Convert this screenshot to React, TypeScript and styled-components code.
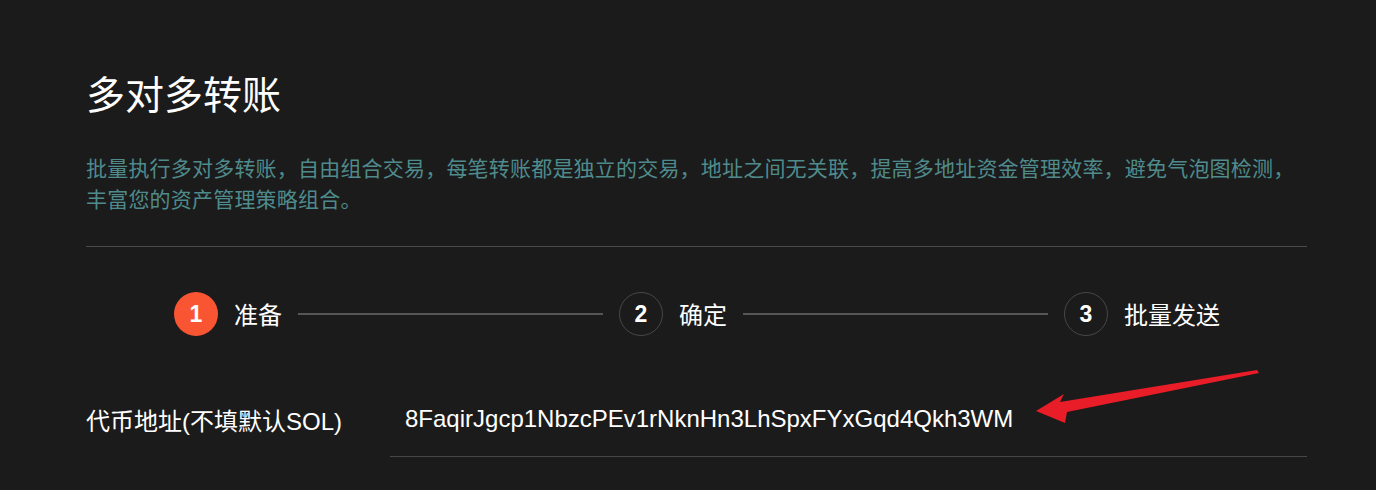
import React from "react";
import styled, { createGlobalStyle } from "styled-components";

const GlobalStyle = createGlobalStyle`
  html, body {
    margin: 0;
    padding: 0;
    background: #1b1b1b;
  }
  body {
    font-family: "Liberation Sans", "Noto Sans CJK SC", sans-serif;
    color: #ffffff;
  }
  * { box-sizing: border-box; }
`;

const Page = styled.div`
  position: relative;
  width: 1376px;
  height: 490px;
  overflow: hidden;
  padding: 68px 69px 0 86px;
  background: #1b1b1b;
`;

const Title = styled.h1`
  margin: 0;
  font-family: "Noto Sans CJK SC", sans-serif;
  font-size: 39px;
  font-weight: 400;
  line-height: 48px;
  color: #ffffff;
`;

const Description = styled.p`
  margin: 36px 0 0;
  font-family: "Noto Sans CJK SC", sans-serif;
  font-size: 21px;
  letter-spacing: 0.2px;
  line-height: 31px;
  color: #4f8b8c;
`;

const Divider = styled.hr`
  margin: 32px 0 0;
  border: 0;
  height: 1px;
  background: #4a4a4a;
`;

const Steps = styled.div`
  display: flex;
  align-items: center;
  margin-top: 45px;
  padding: 0 87px 0 88px;
`;

const Step = styled.div<{ $last?: boolean }>`
  display: flex;
  align-items: center;
  gap: 16px;
  flex: ${(p) => (p.$last ? "0 0 auto" : "1 1 0")};
  margin-right: ${(p) => (p.$last ? "0" : "16px")};
`;

const Circle = styled.div<{ $active?: boolean }>`
  width: 44px;
  height: 44px;
  flex: 0 0 44px;
  border-radius: 50%;
  display: flex;
  align-items: center;
  justify-content: center;
  font-family: "Liberation Sans", sans-serif;
  font-weight: 700;
  font-size: 23px;
  color: #ffffff;
  background: ${(p) => (p.$active ? "#fa5533" : "transparent")};
  border: ${(p) => (p.$active ? "none" : "1px solid #474747")};
`;

const StepLabel = styled.span`
  font-family: "Noto Sans CJK SC", sans-serif;
  font-size: 24px;
  line-height: 32px;
  color: #ffffff;
  white-space: nowrap;
`;

const StepLine = styled.div`
  flex: 1 1 auto;
  height: 2px;
  background: #565656;
`;

const FormRow = styled.div`
  display: flex;
  align-items: stretch;
  margin-top: 46px;
`;

const FieldLabel = styled.label`
  flex: 0 0 304px;
  display: flex;
  align-items: center;
  font-family: "Liberation Sans", "Noto Sans CJK SC", sans-serif;
  font-size: 24px;
  color: #ffffff;
  white-space: nowrap;
`;

const FieldInput = styled.input`
  flex: 1 1 auto;
  height: 75px;
  padding: 0 15px;
  border: 0;
  border-bottom: 1px solid #474747;
  background: transparent;
  outline: none;
  font-family: "Liberation Sans", sans-serif;
  font-size: 24px;
  color: #ffffff;
`;

const Annotation = styled.svg`
  position: absolute;
  left: 0;
  top: 0;
  pointer-events: none;
`;

const steps = ["准备", "确定", "批量发送"];

export default function App() {
  return (
    <>
      <GlobalStyle />
      <Page>
        <Title>多对多转账</Title>
        <Description>
          批量执行多对多转账，自由组合交易，每笔转账都是独立的交易，地址之间无关联，提高多地址资金管理效率，避免气泡图检测，丰富您的资产管理策略组合。
        </Description>
        <Divider />
        <Steps>
          {steps.map((s, i) => {
            const last = i === steps.length - 1;
            return (
              <Step key={s} $last={last}>
                <Circle $active={i === 0}>{i + 1}</Circle>
                <StepLabel>{s}</StepLabel>
                {!last && <StepLine />}
              </Step>
            );
          })}
        </Steps>
        <FormRow>
          <FieldLabel>代币地址(不填默认SOL)</FieldLabel>
          <FieldInput
            readOnly
            defaultValue="8FaqirJgcp1NbzcPEv1rNknHn3LhSpxFYxGqd4Qkh3WM"
          />
        </FormRow>
        <Annotation width="1376" height="490" viewBox="0 0 1376 490">
          <polygon
            points="1036,411 1064,394 1060,402 1257,370 1259,373 1067,412 1065,423"
            fill="#e81d27"
          />
        </Annotation>
      </Page>
    </>
  );
}
